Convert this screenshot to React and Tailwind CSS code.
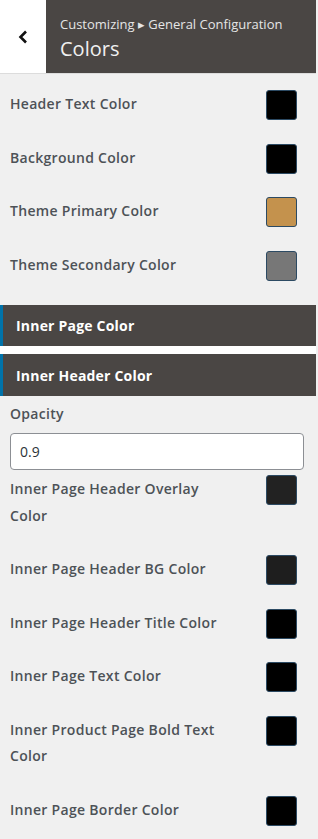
const topColors = [
  { label: 'Header Text Color', color: '#000000' },
  { label: 'Background Color', color: '#000000' },
  { label: 'Theme Primary Color', color: '#c4924d' },
  { label: 'Theme Secondary Color', color: '#777777' },
]

const innerColors = [
  { label: 'Inner Page Header Overlay Color', color: '#222222' },
  { label: 'Inner Page Header BG Color', color: '#1e1e1e' },
  { label: 'Inner Page Header Title Color', color: '#000000' },
  { label: 'Inner Page Text Color', color: '#000000' },
  { label: 'Inner Product Page Bold Text Color', color: '#000000' },
  { label: 'Inner Page Border Color', color: '#000000' },
]

function ColorRow({ label, color }) {
  return (
    <div className="flex items-start justify-between pl-[10px] pr-[19px] mb-[23px]">
      <span className="w-[218px] text-[14px] leading-[26.5px] pt-[1px] pb-[3px] font-semibold tracking-[0.3px] text-[#4d5257]">{label}</span>
      <span
        className="block w-[31px] h-[30px] rounded-[3px] border border-[#2c4a63] shrink-0"
        style={{ backgroundColor: color }}
      />
    </div>
  )
}

function SectionBar({ title, className = '' }) {
  return (
    <div className={`flex items-center bg-[#4a4644] border-l-[3px] border-[#0073aa] pl-[13px] ${className}`}>
      <span className="text-[14px] font-bold tracking-[0.2px] text-white">{title}</span>
    </div>
  )
}

export default function App() {
  return (
    <div className="min-h-screen bg-[#f0f0f0]" style={{ fontFamily: '"Open Sans", "Noto Sans", sans-serif' }}>
      <div className="w-[316px]">
        <div className="flex h-[74px] border-b border-[#dcdcdc]">
          <button className="w-[46px] bg-white flex items-center justify-center">
            <svg width="12" height="14" viewBox="0 0 12 14" fill="none">
              <path d="M9 1.5 L3.5 7 L9 12.5" stroke="#111" strokeWidth="2.6" />
            </svg>
          </button>
          <div className="flex-1 bg-[#4a4644] pl-[14px] pt-[14px]">
            <div className="text-[13px] leading-[20px] text-[#e5e5e5]">Customizing ▸ General Configuration</div>
            <div className="text-[20px] leading-[30px] text-[#f0f0f0]">Colors</div>
          </div>
        </div>

        <div className="flex flex-col pt-[16px]">
          {topColors.map((c) => (
            <ColorRow key={c.label} {...c} />
          ))}
        </div>

        <div className="mt-[1px] bg-white">
          <SectionBar title="Inner Page Color" className="h-[41px]" />
          <div className="h-[8px]" />
          <SectionBar title="Inner Header Color" className="h-[42px]" />
        </div>

        <div className="px-[10px] pt-[5px]">
          <div className="text-[14px] leading-[26px] font-semibold tracking-[0.3px] text-[#4d5257]">Opacity</div>
          <input
            type="text"
            defaultValue="0.9"
            className="mt-[6px] w-[294px] h-[37px] bg-white border border-[#8c8f94] rounded-[4px] px-[9px] text-[14px] text-[#2c3338] outline-none"
          />
        </div>

        <div className="flex flex-col pt-[5px]">
          {innerColors.map((c) => (
            <ColorRow key={c.label} {...c} />
          ))}
        </div>
      </div>
    </div>
  )
}
